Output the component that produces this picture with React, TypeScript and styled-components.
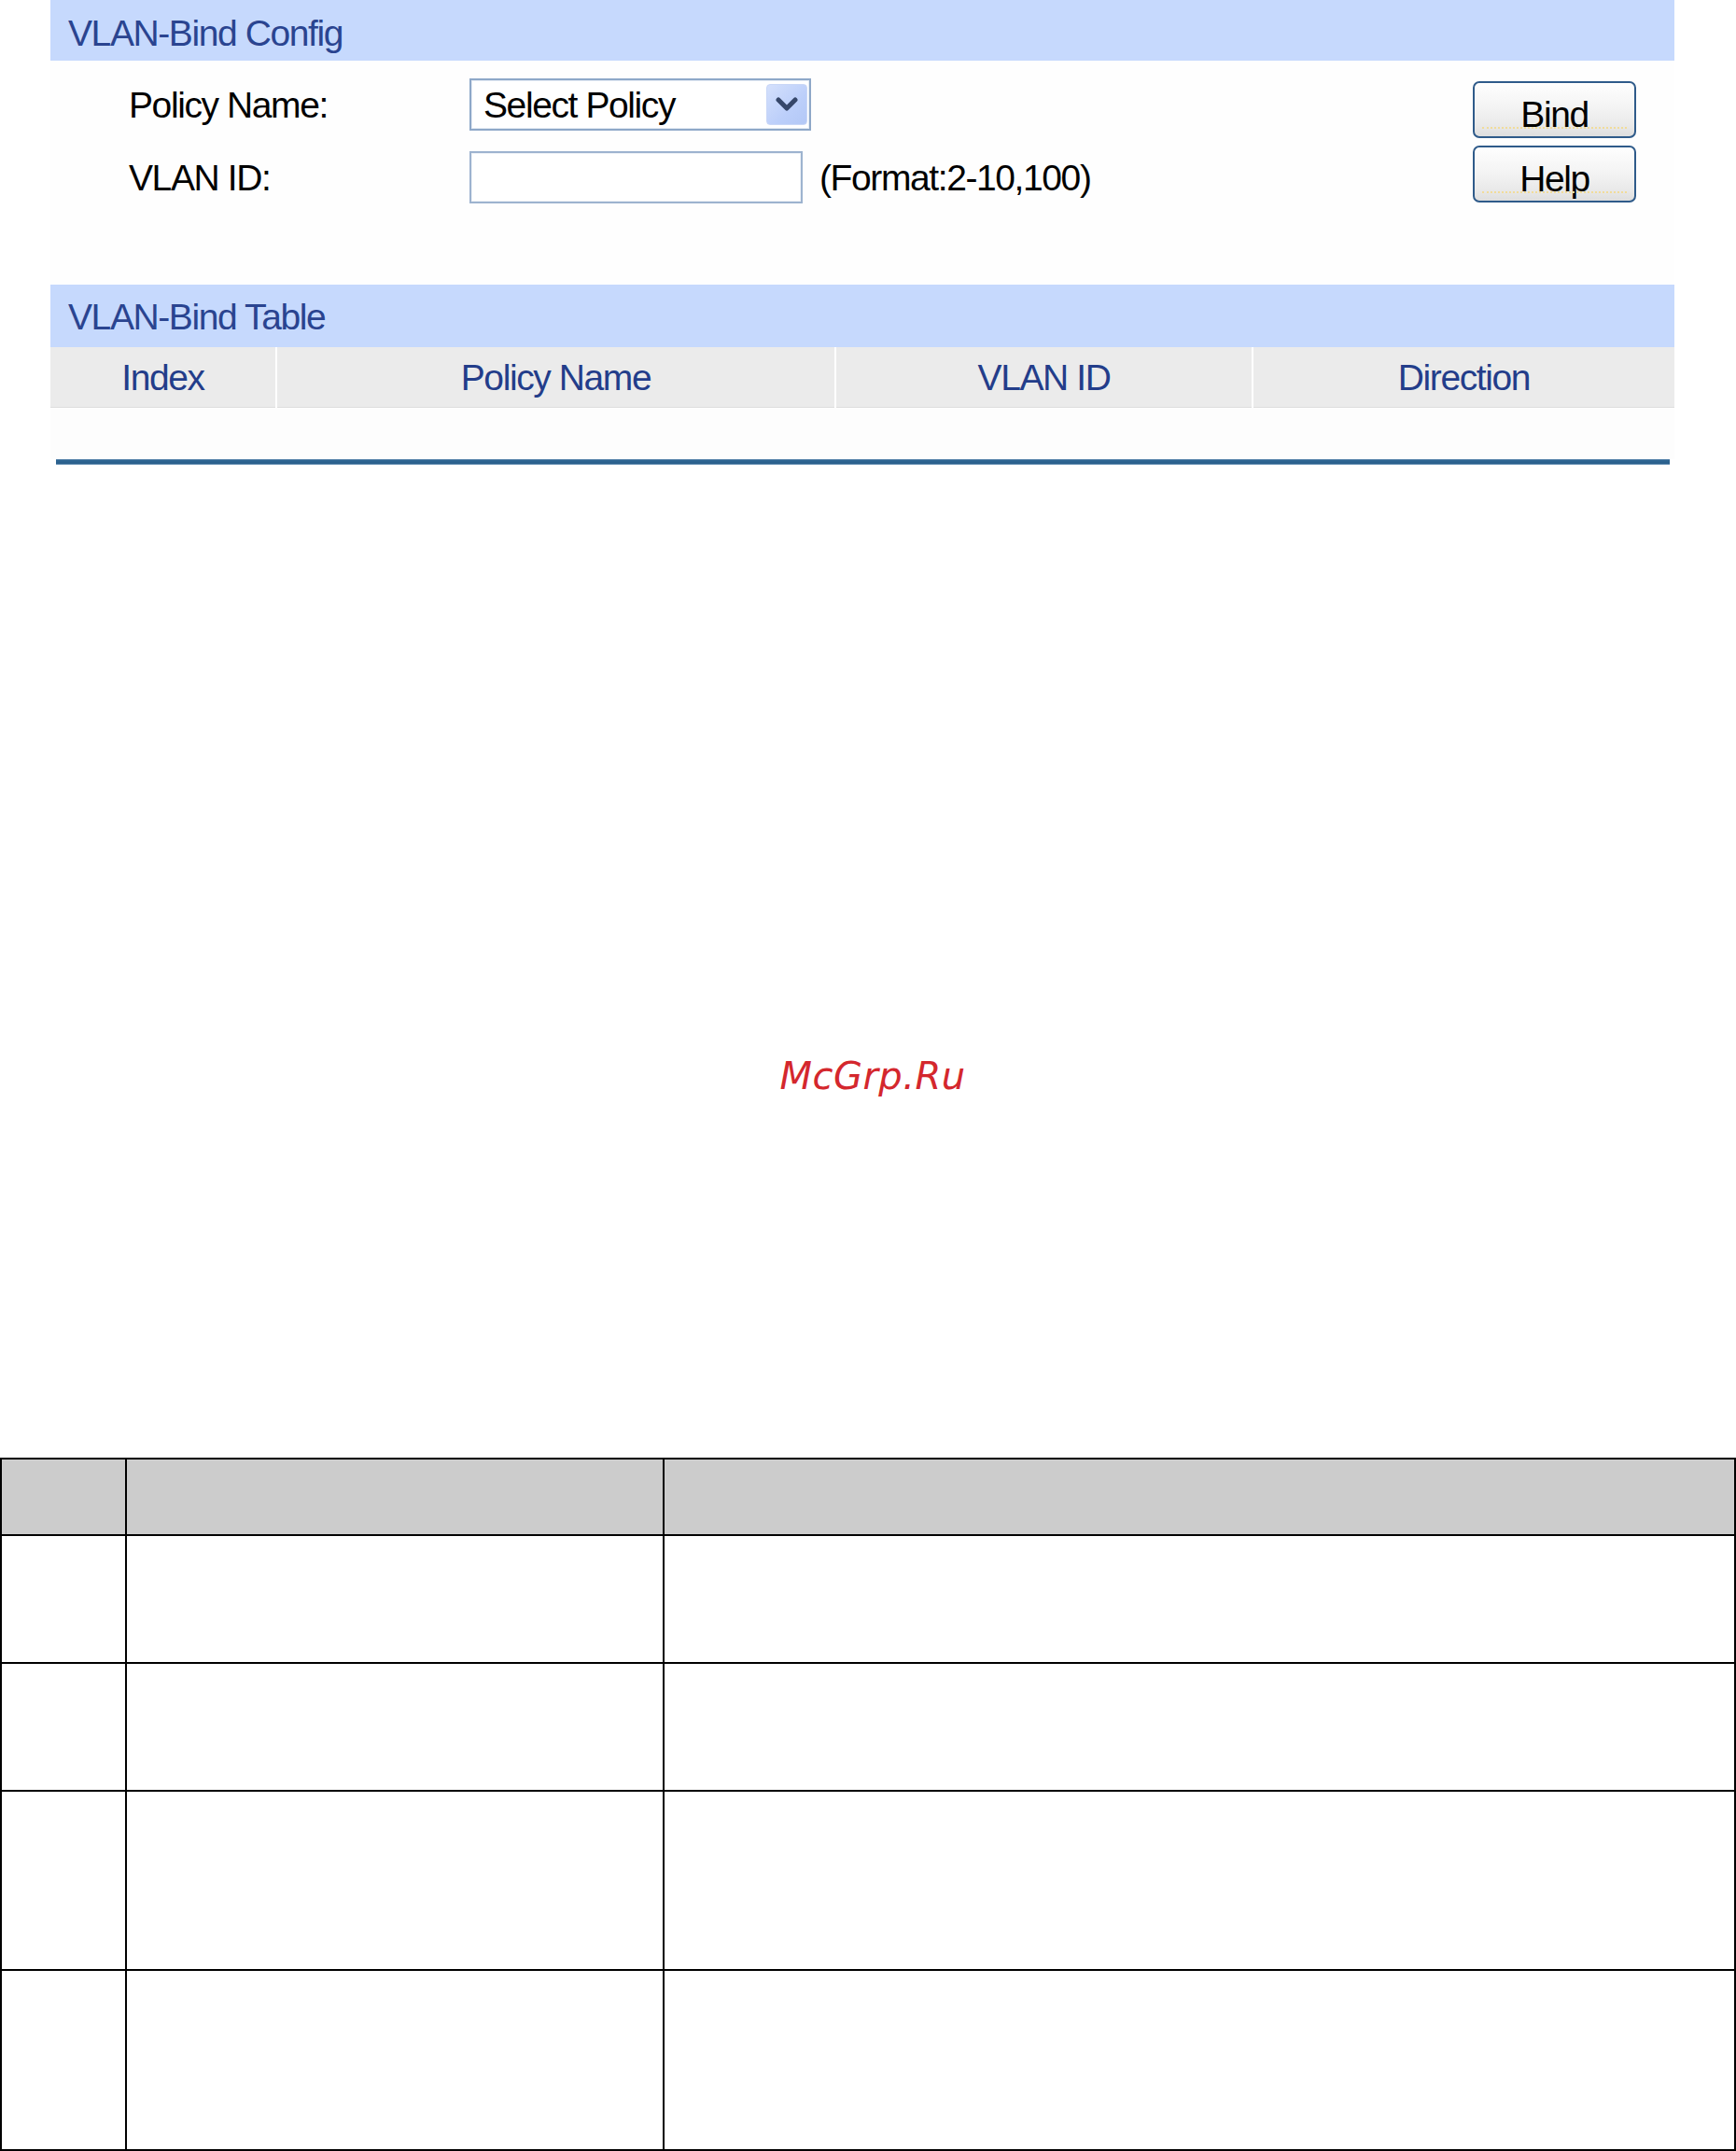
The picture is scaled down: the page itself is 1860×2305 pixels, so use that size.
import React from "react";
import styled, { createGlobalStyle } from "styled-components";

const GlobalStyle = createGlobalStyle`
  html, body { margin: 0; padding: 0; background: #ffffff; }
  body { font-family: "Liberation Sans", Arial, sans-serif; }
  * { box-sizing: border-box; }
`;

const Page = styled.div`
  width: 1860px;
  background: #ffffff;
`;

const Panel = styled.section`
  margin-left: 54px;
  width: 1740px;
  display: flex;
  flex-direction: column;
`;

const UiText = styled.span`
  font-family: "Liberation Sans", Arial, sans-serif;
  font-size: 39px;
  line-height: 39px;
  letter-spacing: -1.4px;
  white-space: nowrap;
`;

const SectionHeader = styled.div<{ $h: number; $pt: number }>`
  height: ${(p) => p.$h}px;
  padding: ${(p) => p.$pt}px 0 0 19px;
  background: #c6d9fd;
  color: #2a4490;
`;

const ConfigBody = styled.div`
  height: 240px;
  display: flex;
  justify-content: space-between;
  align-items: flex-start;
  padding: 19px 41px 0 84px;
  background: #fefefe;
`;

const FormGrid = styled.div`
  display: grid;
  grid-template-columns: 365px auto;
  row-gap: 22px;
  align-items: center;
`;

const Label = styled(UiText)`
  color: #000000;
`;

const SelectBox = styled.div`
  width: 366px;
  height: 56px;
  border: 2px solid #8ea8c8;
  box-shadow: inset 0 0 0 1px #e4ebf4;
  background: #ffffff;
  display: flex;
  align-items: center;
  justify-content: space-between;
  padding: 0 2px 0 13px;
  color: #000000;
`;

const ArrowButton = styled.div`
  width: 44px;
  height: 44px;
  border-radius: 4px;
  background: linear-gradient(135deg, #d4e0fc 0%, #bccffa 60%, #b3c8f6 100%);
  border: 1px solid #c9d7f7;
  display: flex;
  align-items: center;
  justify-content: center;
`;

const InputRow = styled.div`
  display: flex;
  align-items: center;
  gap: 18px;
`;

const TextInput = styled.div`
  width: 357px;
  height: 56px;
  border: 2px solid #9db3cf;
  box-shadow: inset 0 0 0 1px #eef2f7;
  background: #ffffff;
`;

const ButtonColumn = styled.div`
  margin-top: 3px;
  display: flex;
  flex-direction: column;
  gap: 8px;
`;

const ActionButton = styled.div`
  position: relative;
  width: 175px;
  height: 61px;
  border: 2px solid #2f5b8a;
  border-radius: 7px;
  background: linear-gradient(#fefefe 0%, #f4f4f4 45%, #e9e9e9 80%, #dedede 100%);
  display: flex;
  align-items: center;
  justify-content: center;
  padding-top: 10px;
  color: #000000;
  &::after {
    content: "";
    position: absolute;
    left: 8px;
    right: 8px;
    bottom: 8px;
    border-bottom: 2px dotted #f1dc9a;
  }
`;

const ColumnHeaderRow = styled.div`
  height: 65px;
  display: grid;
  grid-template-columns: 241px 597px 445px 451px;
  column-gap: 2px;
  background: #ffffff;
`;

const HeaderCell = styled.div`
  background: #ebebeb;
  border-bottom: 1px solid #dedede;
  color: #233d8a;
  display: flex;
  align-items: center;
  justify-content: center;
`;

const EmptyRow = styled.div`
  height: 55px;
  background: #fdfdfd;
`;

const BlueRule = styled.div`
  height: 6px;
  margin: 0 5px 0 6px;
  background: linear-gradient(#6f96b8 0%, #2d6592 25%, #2a5f8c 75%, #7aa0c0 100%);
`;

const Watermark = styled.p`
  margin: 634px 0 388px;
  padding-left: 10px;
  text-align: center;
  font-family: "DejaVu Sans", Verdana, sans-serif;
  font-style: italic;
  font-size: 40px;
  line-height: 42px;
  letter-spacing: 0.5px;
  color: #d4272d;
`;

const DocTable = styled.div`
  width: 1860px;
  display: grid;
  grid-template-columns: 132px 574px 1fr;
  grid-template-rows: 80px 135px 135px 190px 191px;
  gap: 2px;
  padding: 2px;
  background: #000000;
`;

const DocCell = styled.div<{ $head?: boolean }>`
  background: ${(p) => (p.$head ? "#cccccc" : "#ffffff")};
`;

const Chevron = () => (
  <svg width="24" height="16" viewBox="0 0 24 16" aria-hidden="true">
    <polyline
      points="3,3 12,12 21,3"
      fill="none"
      stroke="#36476a"
      strokeWidth="5"
      strokeLinecap="round"
      strokeLinejoin="round"
    />
  </svg>
);

const columns = ["Index", "Policy Name", "VLAN ID", "Direction"];
const docRows = [true, false, false, false, false];

export default function App() {
  return (
    <Page>
      <GlobalStyle />
      <Panel>
        <SectionHeader $h={65} $pt={16}>
          <UiText>VLAN-Bind Config</UiText>
        </SectionHeader>
        <ConfigBody>
          <FormGrid>
            <Label>Policy Name:</Label>
            <SelectBox>
              <UiText>Select Policy</UiText>
              <ArrowButton>
                <Chevron />
              </ArrowButton>
            </SelectBox>
            <Label>VLAN ID:</Label>
            <InputRow>
              <TextInput />
              <Label>(Format:2-10,100)</Label>
            </InputRow>
          </FormGrid>
          <ButtonColumn>
            <ActionButton>
              <UiText>Bind</UiText>
            </ActionButton>
            <ActionButton>
              <UiText>Help</UiText>
            </ActionButton>
          </ButtonColumn>
        </ConfigBody>
        <SectionHeader $h={67} $pt={15}>
          <UiText>VLAN-Bind Table</UiText>
        </SectionHeader>
        <ColumnHeaderRow>
          {columns.map((c) => (
            <HeaderCell key={c}>
              <UiText>{c}</UiText>
            </HeaderCell>
          ))}
        </ColumnHeaderRow>
        <EmptyRow />
        <BlueRule />
      </Panel>
      <Watermark>McGrp.Ru</Watermark>
      <DocTable>
        {docRows.map((head, r) =>
          [0, 1, 2].map((c) => <DocCell key={`${r}-${c}`} $head={head} />)
        )}
      </DocTable>
    </Page>
  );
}
